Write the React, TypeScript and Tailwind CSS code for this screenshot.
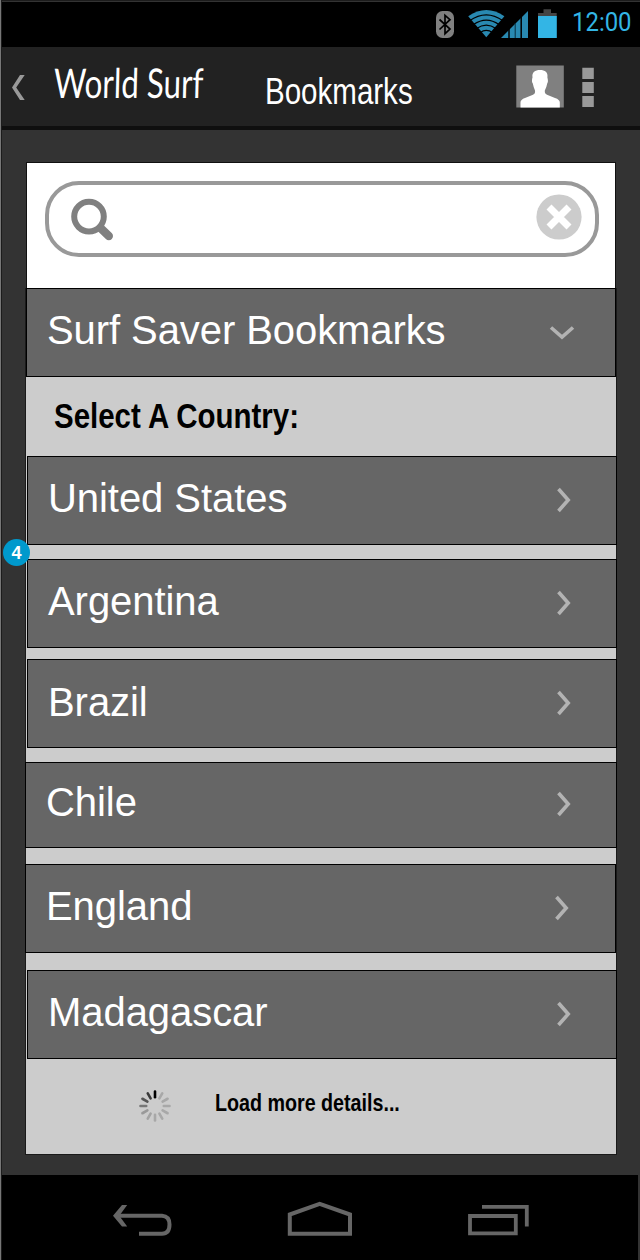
import React from "react";

type Country = { name: string; box: string; text: string; chevron: string };

const countries: Country[] = [
  { name: "United States", box: "ml-[2px] w-[590px] h-[89px] pl-[20px]", text: "pt-[20px]", chevron: "mr-[45px]" },
  { name: "Argentina", box: "mt-[14px] ml-[2px] w-[590px] h-[89px] pl-[20px]", text: "pt-[20px]", chevron: "mr-[45px]" },
  { name: "Brazil", box: "mt-[11.4px] ml-[2px] w-[590px] h-[89px] pl-[20px]", text: "pt-[20.6px]", chevron: "mr-[45px]" },
  { name: "Chile", box: "mt-[13.6px] w-[592px] h-[86px] pl-[20px]", text: "pt-[18px]", chevron: "mr-[45px]" },
  { name: "England", box: "mt-[16px] w-[591px] h-[89px] pl-[20px]", text: "pt-[20px]", chevron: "mr-[46px]" },
  { name: "Madagascar", box: "mt-[17px] ml-[2px] w-[590px] h-[89px] pl-[20px]", text: "pt-[20px]", chevron: "mr-[45px]" },
];

const spokes = ["#000", "#a8a8a8", "#a8a8a8", "#a8a8a8", "#a8a8a8", "#a8a8a8", "#a8a8a8", "#a3a3a3", "#999", "#777", "#555", "#3a3a3a"];

function StatusBar() {
  return (
    <div className="flex h-[44px] justify-end bg-black">
      <svg className="h-[44px] w-[132px] shrink-0" viewBox="430 3 132 44">
        <rect x="436" y="11" width="18" height="27" rx="6.5" fill="#808080" />
        <path d="M439.5 19.5L450 29L445 33.7V15.3L450 19.7L439.5 29.5" fill="none" stroke="#000" strokeWidth="1.7" />
        <path d="M468.2 16.2Q486.3 3.6 504.4 16.2L486.3 37.2Z" fill="#2989b1" />
        <g fill="none" stroke="#000" strokeWidth="1.2">
          <path d="M469.5 20.8Q486.3 9 503 20.8" />
          <path d="M473.5 24.6Q486.3 15.8 499 24.6" />
          <path d="M476.5 28.6Q486.3 21.5 496 28.6" />
          <path d="M480 32.7Q486.3 28 492.7 32.7" />
        </g>
        <path d="M501 38L528 11V38Z" fill="#2989b1" />
        <path d="M509 28V38M521.2 17V38" stroke="#000" strokeWidth="1.5" />
        <path d="M515.2 23V38" stroke="#092e3d" strokeWidth="1" />
        <path d="M538 16.5V13H543.5V9.3H551V13H556.7V16.5Z" fill="#444" />
        <rect x="538" y="16" width="18.8" height="22" fill="#33b5e5" />
      </svg>
      <div className="w-[78px] shrink-0 pt-[4px] pl-[10px]">
        <span className="inline-block origin-left scale-x-[0.92] font-['Roboto'] text-[26px] leading-[30px] text-[#33b5e5]">12:00</span>
      </div>
    </div>
  );
}

function AppBar() {
  return (
    <header className="flex h-[83px] border-b-4 border-[#0f0f0f] bg-[#222]">
      <svg className="h-[79px] w-[52px] shrink-0" viewBox="2 47 52 79">
        <path d="M20 75H24.7L16.2 87.5L24.7 100H20L12 87.5Z" fill="#999" />
      </svg>
      <div className="w-[211px] shrink-0 pt-[11px]">
        <span className="inline-block origin-left -skew-x-2 scale-x-[0.765] font-['Lato'] text-[41px] leading-[50px] whitespace-nowrap text-white">World Surf</span>
      </div>
      <h1 className="w-[245px] shrink-0 pt-[27px]">
        <span className="inline-block origin-left scale-x-[0.82] text-[36px] leading-[36px] text-white">Bookmarks</span>
      </h1>
      <svg className="h-[79px] w-[90px] shrink-0" viewBox="510 47 90 79">
        <rect x="516.3" y="65.5" width="47.5" height="42" fill="#808080" />
        <path d="M520.5 107.5V102.5Q520.5 99.5 525 98L533 94.8Q535.5 93.7 535 90.5Q533.5 87 532.8 83.5C531.5 82 532 79 532.5 77.5C531.8 72 535 70 540 70C545 70 548.2 72 547.4 77.5C548 80 548.3 82 547.2 83.5Q546.5 87.5 544.8 90.5Q544.5 93.7 547 94.8L555 98Q559.8 99.5 559.8 102.5V107.5Z" fill="#fff" />
        <path d="M582.3 67.7H593.8V79H582.3ZM582.3 82H593.8V93H582.3ZM582.3 96H593.8V107H582.3Z" fill="#999" />
      </svg>
    </header>
  );
}

function SearchBox() {
  return (
    <div className="ml-px h-[126px] w-[590px] border border-b-0 border-[#111] bg-white px-[18px] pt-[18px]">
      <div className="flex h-[76px] w-[554px] items-center justify-between rounded-[34px] border-4 border-[#999] pr-[13px] pl-[21px]">
        <svg className="h-[44px] w-[46px]" viewBox="70 197 46 44" fill="none" stroke="#808080">
          <circle cx="89" cy="216.6" r="14.8" strokeWidth="6" />
          <path d="M100.5 228L108.8 236" strokeWidth="8.4" strokeLinecap="round" />
        </svg>
        <svg className="-mt-[4px] h-[46px] w-[46px]" viewBox="0 0 46 46">
          <circle cx="23" cy="23" r="22.6" fill="#ccc" />
          <path d="M13 13L33 33M33 13L13 33" stroke="#fff" strokeWidth="7" />
        </svg>
      </div>
    </div>
  );
}

function CountryRow({ name, box, text, chevron }: Country) {
  return (
    <li className={`flex items-center justify-between border border-black bg-[#666] ${box}`}>
      <span className={`self-start text-[40px] leading-[42px] tracking-[-0.06px] whitespace-nowrap text-white ${text}`}>{name}</span>
      <svg className={`-mt-px h-[26px] w-[14px] ${chevron}`} viewBox="0 0 14 26" fill="none">
        <path d="M1.5 2L11.2 13L1.5 24" stroke="#b3b3b3" strokeWidth="3.6" />
      </svg>
    </li>
  );
}

function LoadMore() {
  return (
    <div className="flex h-[95px] items-center">
      <svg className="ml-[113px] h-[34px] w-[34px]" viewBox="-17 -17 34 34">
        {spokes.map((color, i) => (
          <path key={i} d="M0 -14.5V-8.8" stroke={color} strokeWidth="2.6" strokeLinecap="round" transform={`rotate(${i * 30})`} />
        ))}
      </svg>
      <span className="-mt-[7px] ml-[43px] inline-block origin-left scale-x-[0.82] text-[24px] leading-[28px] font-bold whitespace-nowrap">Load more details...</span>
    </div>
  );
}

function NavigationBar() {
  return (
    <nav className="mr-[2px] flex h-[85px] bg-black">
      <svg className="h-[85px] w-[200px] shrink-0" viewBox="2 1175 200 85" fill="none" stroke="#666" strokeWidth="4">
        <path d="M118 1215.8H162Q169.5 1216.3 169.5 1224.5Q169.5 1233.7 162 1233.7H139" />
        <path d="M122 1205H127.2L119.3 1215.7L127.2 1226.5H122L113 1215.7Z" fill="#666" stroke="none" />
      </svg>
      <svg className="h-[85px] w-[230px] shrink-0" viewBox="202 1175 230 85" fill="none" stroke="#666" strokeWidth="4">
        <path d="M289.8 1233.7V1214.5L319.7 1203.8L350 1214.5V1233.7Z" />
      </svg>
      <svg className="h-[85px] w-[200px] shrink-0" viewBox="432 1175 200 85" fill="none" stroke="#666" strokeWidth="3.8">
        <path d="M482 1206.8H526.8V1226.5M470 1216H515.8V1233.3H470Z" />
      </svg>
    </nav>
  );
}

export default function App() {
  return (
    <div className="relative h-[1260px] w-[640px] overflow-hidden border-l border-[#777] bg-[#333] font-['Liberation_Sans',sans-serif]">
      <div className="h-[1260px] border-l border-[#1c1c1c]">
        <div className="h-[3px] border-t border-b border-t-[#1c1c1c] border-b-black bg-[#333]" />
        <StatusBar />
        <AppBar />
        <main className="h-[1045px] pt-[32px] pl-[23px]">
          <SearchBox />
          <section className="h-[867px] w-[592px] bg-[#ccc] shadow-[inset_0_0_0_1px_#1a1a1a]">
            <div className="ml-px flex h-[89px] w-[590px] items-center justify-between border border-black bg-[#666] pl-[20px]">
              <span className="self-start pt-[20px] text-[40px] leading-[42px] tracking-[-0.08px] whitespace-nowrap text-white">Surf Saver Bookmarks</span>
              <svg className="mr-[39px] h-[16px] w-[28px]" viewBox="0 0 28 16" fill="none">
                <path d="M3 2.5L14 12L25 2.5" stroke="#b3b3b3" strokeWidth="3.6" />
              </svg>
            </div>
            <h2 className="h-[79px] pt-[20px] pl-[29px]">
              <span className="inline-block origin-left scale-x-[0.83] text-[35.5px] leading-[38px] font-bold whitespace-nowrap">Select A Country:</span>
            </h2>
            <ul>
              {countries.map((country) => (
                <CountryRow key={country.name} {...country} />
              ))}
            </ul>
            <LoadMore />
          </section>
        </main>
        <NavigationBar />
      </div>
      <div className="absolute top-[539px] left-[2px] flex h-[27px] w-[27px] items-center justify-center rounded-full bg-[#0099cc] text-[18px] leading-none font-bold text-white">4</div>
    </div>
  );
}
